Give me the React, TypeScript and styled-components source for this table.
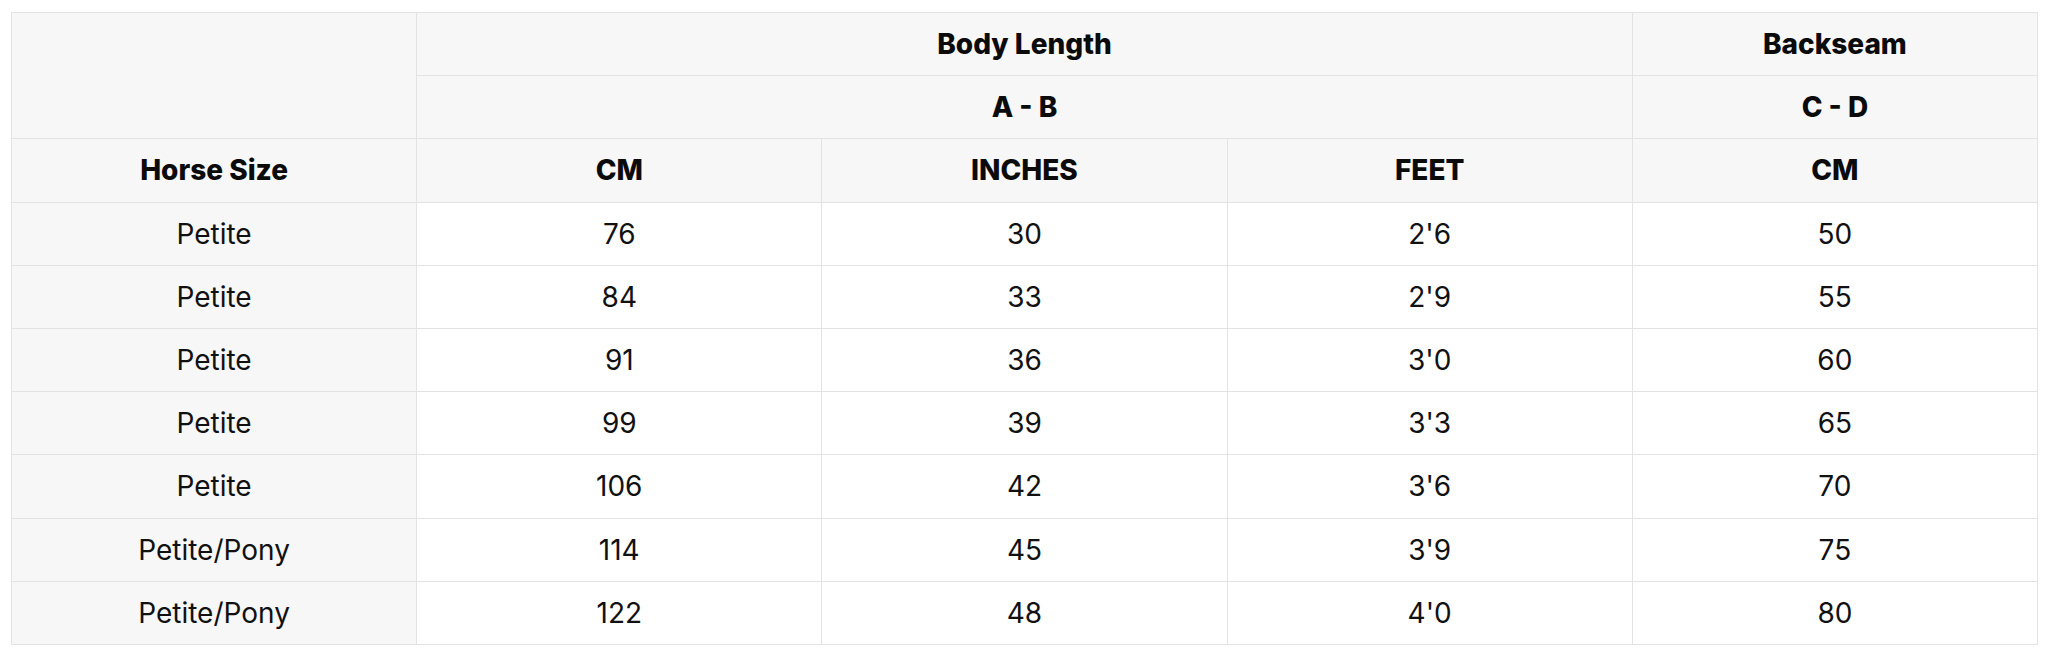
import React from "react";
import styled, { createGlobalStyle } from "styled-components";

const Global = createGlobalStyle`
  html, body { margin: 0; padding: 0; background: #ffffff; }
  body { font-family: Inter, "Open Sans", sans-serif; color: #111111; }
`;

const Wrap = styled.div`
  padding: 12px 10px 0 11px;
`;

const Table = styled.table`
  width: 2027px;
  border-collapse: collapse;
  table-layout: fixed;
  font-size: 28px;
`;

const Th = styled.th`
  height: 62.2px;
  padding: 0;
  border: 1px solid #e3e3e3;
  background: #f7f7f7;
  font-weight: 800;
  text-align: center;
  vertical-align: middle;
  color: #0b0b0b;
`;

const Td = styled.td<{ $shade?: boolean }>`
  height: 62.2px;
  padding: 0;
  border: 1px solid #e3e3e3;
  background: ${(p) => (p.$shade ? "#f7f7f7" : "#ffffff")};
  font-weight: 400;
  text-align: center;
  vertical-align: middle;
  color: #111111;
`;

const rows: [string, string, string, string, string][] = [
  ["Petite", "76", "30", "2'6", "50"],
  ["Petite", "84", "33", "2'9", "55"],
  ["Petite", "91", "36", "3'0", "60"],
  ["Petite", "99", "39", "3'3", "65"],
  ["Petite", "106", "42", "3'6", "70"],
  ["Petite/Pony", "114", "45", "3'9", "75"],
  ["Petite/Pony", "122", "48", "4'0", "80"],
];

export default function App() {
  return (
    <>
      <Global />
      <Wrap>
        <Table>
          <colgroup>
            <col />
            <col />
            <col />
            <col />
            <col />
          </colgroup>
          <thead>
            <tr>
              <Th rowSpan={2} />
              <Th colSpan={3}>Body Length</Th>
              <Th>Backseam</Th>
            </tr>
            <tr>
              <Th colSpan={3}>A - B</Th>
              <Th>C - D</Th>
            </tr>
            <tr>
              <Th>Horse Size</Th>
              <Th>CM</Th>
              <Th>INCHES</Th>
              <Th>FEET</Th>
              <Th>CM</Th>
            </tr>
          </thead>
          <tbody>
            {rows.map((r, i) => (
              <tr key={i}>
                <Td $shade>{r[0]}</Td>
                <Td>{r[1]}</Td>
                <Td>{r[2]}</Td>
                <Td>{r[3]}</Td>
                <Td>{r[4]}</Td>
              </tr>
            ))}
          </tbody>
        </Table>
      </Wrap>
    </>
  );
}
